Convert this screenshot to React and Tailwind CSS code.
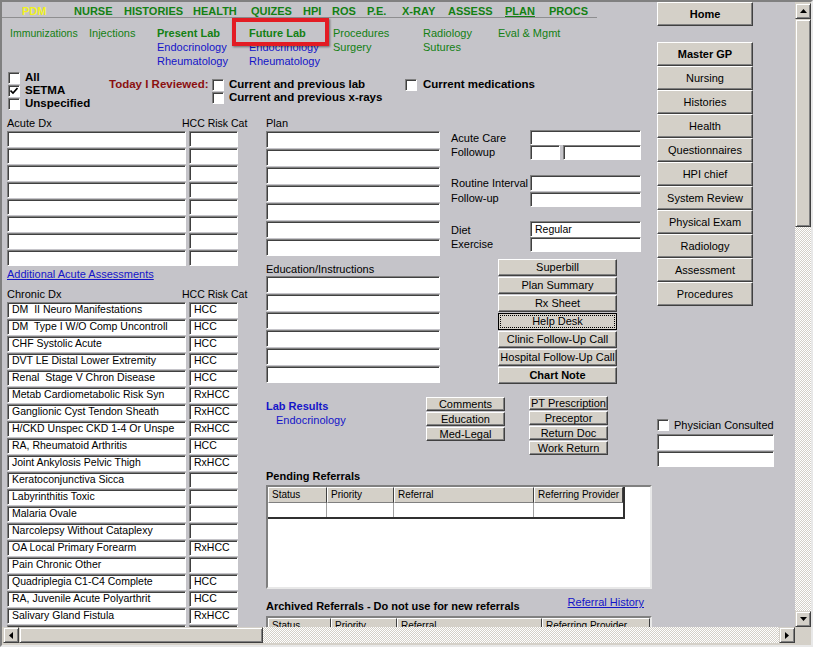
import React from "react";

const inputCls =
  "bg-white border border-t-[#808080] border-l-[#808080] border-b-white border-r-white shadow-[inset_1px_1px_0_#404040] overflow-hidden whitespace-pre text-[10.5px] leading-[13px] pl-[4px] text-black";
const btnCls =
  "bg-[#d4d0c8] border border-t-white border-l-white border-b-[#404040] border-r-[#404040] shadow-[inset_-1px_-1px_0_#808080] text-[11px] text-black flex items-center justify-center whitespace-nowrap";

const NAV = [
  ["PDM", "w-[52px]", "text-[#f2f21e]", ""],
  ["NURSE", "w-[50px]", "text-[#138013]", ""],
  ["HISTORIES", "w-[69px]", "text-[#138013]", ""],
  ["HEALTH", "w-[58px]", "text-[#138013]", ""],
  ["QUIZES", "w-[52px]", "text-[#138013]", ""],
  ["HPI", "w-[29px]", "text-[#138013]", ""],
  ["ROS", "w-[35px]", "text-[#138013]", ""],
  ["P.E.", "w-[35px]", "text-[#138013]", ""],
  ["X-RAY", "w-[46px]", "text-[#138013]", ""],
  ["ASSESS", "w-[57px]", "text-[#138013]", ""],
  ["PLAN", "w-[44px]", "text-[#138013]", "underline"],
  ["PROCS", "w-[48px]", "text-[#138013]", ""],
];

const CHRONIC = [
  ["DM  II Neuro Manifestations", "HCC"],
  ["DM  Type I W/O Comp Uncontroll", "HCC"],
  ["CHF Systolic Acute", "HCC"],
  ["DVT LE Distal Lower Extremity", "HCC"],
  ["Renal  Stage V Chron Disease", "HCC"],
  ["Metab Cardiometabolic Risk Syn", "RxHCC"],
  ["Ganglionic Cyst Tendon Sheath", "RxHCC"],
  ["H/CKD Unspec CKD 1-4 Or Unspe", "RxHCC"],
  ["RA, Rheumatoid Arthritis", "HCC"],
  ["Joint Ankylosis Pelvic Thigh", "RxHCC"],
  ["Keratoconjunctiva Sicca", ""],
  ["Labyrinthitis Toxic", ""],
  ["Malaria Ovale", ""],
  ["Narcolepsy Without Cataplexy", ""],
  ["OA Local Primary Forearm", "RxHCC"],
  ["Pain Chronic Other", ""],
  ["Quadriplegia C1-C4 Complete", "HCC"],
  ["RA, Juvenile Acute Polyarthrit", "HCC"],
  ["Salivary Gland Fistula", "RxHCC"],
  ["", ""],
];

const SIDE = [
  "Nursing",
  "Histories",
  "Health",
  "Questionnaires",
  "HPI chief",
  "System Review",
  "Physical Exam",
  "Radiology",
  "Assessment",
  "Procedures",
];

function Box({ checked }) {
  return (
    <div className="w-[12px] h-[12px] shrink-0 bg-white border border-t-[#808080] border-l-[#808080] border-b-white border-r-white shadow-[inset_1px_1px_0_#404040] flex items-center justify-center">
      {checked && (
        <svg width="8" height="8" viewBox="0 0 8 8">
          <path d="M0.5 3.5 L3 6 L7.5 1" stroke="#000" strokeWidth="1.6" fill="none" />
        </svg>
      )}
    </div>
  );
}

function Tri({ dir }) {
  const pts = {
    up: "0,4 3.5,0 7,4",
    down: "0,0 7,0 3.5,4",
    left: "4,0 4,7 0,3.5",
    right: "0,0 0,7 4,3.5",
  }[dir];
  const vert = dir === "up" || dir === "down";
  return (
    <svg width={vert ? 7 : 4} height={vert ? 4 : 7} viewBox={vert ? "0 0 7 4" : "0 0 4 7"}>
      <polygon points={pts} fill="#000" />
    </svg>
  );
}

const arrowCls =
  "w-[16px] h-[16px] shrink-0 bg-[#d4d0c8] border border-t-[#d4d0c8] border-l-[#d4d0c8] border-b-[#404040] border-r-[#404040] shadow-[inset_1px_1px_0_#fff,inset_-1px_-1px_0_#808080] flex items-center justify-center";
const ditherCls =
  "bg-[image:repeating-conic-gradient(#d4d0c8_0%_25%,#ffffff_0%_50%)] bg-[length:2px_2px]";

function HeaderCell({ w, children }) {
  return (
    <div
      className={`${w} h-[16px] shrink-0 bg-[#d4d0c8] border border-t-white border-l-white border-b-[#808080] border-r-[#404040] text-[10px] leading-[14px] pl-[3px] text-black whitespace-nowrap overflow-hidden`}
    >
      {children}
    </div>
  );
}

export default function App() {
  return (
    <div className="w-[813px] h-[647px] bg-[#d4d0c8] border-t-2 border-l-2 border-t-[#808080] border-l-[#808080] border-r-2 border-b-2 border-r-[#e8e8e8] border-b-[#e8e8e8] flex flex-col font-['Liberation_Sans',Arial,sans-serif] text-black overflow-hidden">
      <div className="flex h-[625px] shrink-0">
        {/* content */}
        <div className="w-[793px] h-[625px] bg-[#c5c4c9] overflow-hidden flex">
          {/* main column */}
          <div className="w-[655px] shrink-0 relative flex flex-col">
            {/* top nav */}
            <div className="flex h-[18px] w-[595px] border-b border-[#8e8e90]">
              <div className="w-[20px] shrink-0" />
              {NAV.map(([t, w, c, u]) => (
                <div
                  key={t}
                  className={`${w} ${c} ${u} shrink-0 pt-[3px] leading-[12px] text-[11px] font-bold whitespace-nowrap`}
                >
                  {t}
                </div>
              ))}
            </div>

            {/* sub nav */}
            <div className="flex mt-[8px] ml-[8px] text-[11px] leading-[14px] text-[#138013]">
              <div className="w-[79px] shrink-0 text-[10.5px]">Immunizations</div>
              <div className="w-[68px] shrink-0">Injections</div>
              <div className="w-[92px] shrink-0 flex flex-col">
                <span className="font-bold">Present Lab</span>
                <span className="text-[#1414c8]">Endocrinology</span>
                <span className="text-[#1414c8]">Rheumatology</span>
              </div>
              <div className="w-[84px] shrink-0 flex flex-col">
                <span className="font-bold">Future Lab</span>
                <span className="text-[#1414c8]">Endocrinology</span>
                <span className="text-[#1414c8]">Rheumatology</span>
              </div>
              <div className="w-[90px] shrink-0 flex flex-col">
                <span>Procedures</span>
                <span>Surgery</span>
              </div>
              <div className="w-[75px] shrink-0 flex flex-col">
                <span>Radiology</span>
                <span>Sutures</span>
              </div>
              <div className="shrink-0">Eval &amp; Mgmt</div>
            </div>

            {/* red highlight annotation */}
            <div className="absolute left-[230px] top-[16px] w-[97px] h-[28px] border-[4px] border-[#e31c24] shadow-[1px_1px_2px_rgba(0,0,0,0.45)]" />

            {/* checkbox area */}
            <div className="flex mt-[3px] text-[11.5px] font-bold">
              <div className="w-[107px] shrink-0 pl-[6px] flex flex-col">
                {[
                  ["All", false],
                  ["SETMA", true],
                  ["Unspecified", false],
                ].map(([t, c]) => (
                  <div key={t} className="h-[13px] flex items-center gap-[5px] whitespace-nowrap">
                    <Box checked={c} />
                    <span className="leading-[13px]">{t}</span>
                  </div>
                ))}
              </div>
              <div className="w-[103px] shrink-0 mt-[7px] leading-[13px] text-[#8b1010] whitespace-nowrap">
                Today I Reviewed:
              </div>
              <div className="w-[193px] shrink-0 mt-[7px] flex flex-col">
                {["Current and previous lab", "Current and previous x-rays"].map((t) => (
                  <div key={t} className="h-[13px] flex items-center gap-[5px] whitespace-nowrap">
                    <Box />
                    <span className="leading-[13px]">{t}</span>
                  </div>
                ))}
              </div>
              <div className="mt-[7px] h-[13px] flex items-center gap-[6px] whitespace-nowrap">
                <Box />
                <span className="leading-[13px]">Current medications</span>
              </div>
            </div>

            {/* two columns */}
            <div className="flex mt-[6px] text-[11px]">
              {/* left column */}
              <div className="w-[231px] ml-[5px] shrink-0 flex flex-col">
                <div className="flex h-[15px] leading-[15px] whitespace-nowrap">
                  <span className="w-[175px] shrink-0">Acute Dx</span>
                  <span className="text-[10.5px]">HCC Risk Cat</span>
                </div>
                {Array.from({ length: 8 }).map((_, i) => (
                  <div key={i} className="flex gap-[3px] mb-[1px]">
                    <div className={`${inputCls} w-[179px] h-[16px]`} />
                    <div className={`${inputCls} w-[49px] h-[16px]`} />
                  </div>
                ))}
                <div className="h-[20px] pt-[1px] leading-[13px]">
                  <span className="text-[#1414c8] underline whitespace-nowrap">Additional Acute Assessments</span>
                </div>
                <div className="flex h-[15px] leading-[15px] whitespace-nowrap">
                  <span className="w-[175px] shrink-0">Chronic Dx</span>
                  <span className="text-[10.5px]">HCC Risk Cat</span>
                </div>
                {CHRONIC.map(([d, h], i) => (
                  <div key={i} className="flex gap-[3px] mb-[1px]">
                    <div className={`${inputCls} w-[179px] h-[16px]`}>{d}</div>
                    <div className={`${inputCls} w-[49px] h-[16px]`}>{h}</div>
                  </div>
                ))}
              </div>

              {/* middle column */}
              <div className="ml-[28px] w-[392px] shrink-0 flex flex-col">
                {/* plan section */}
                <div className="flex">
                  <div className="w-[174px] shrink-0 flex flex-col">
                    <div className="h-[15px] leading-[15px]">Plan</div>
                    {Array.from({ length: 7 }).map((_, i) => (
                      <div key={i} className={`${inputCls} w-[174px] h-[17px] mb-[1px]`} />
                    ))}
                  </div>
                  <div className="ml-[11px] pt-[14px] flex flex-col whitespace-nowrap">
                    <div className="flex h-[15px]">
                      <span className="w-[79px] leading-[15px] pt-[1px]">Acute Care</span>
                      <div className={`${inputCls} w-[111px] h-[15px]`} />
                    </div>
                    <div className="flex h-[15px]">
                      <span className="w-[79px] leading-[15px]">Followup</span>
                      <div className={`${inputCls} w-[30px] h-[15px]`} />
                      <div className={`${inputCls} w-[78px] h-[15px] ml-[3px]`} />
                    </div>
                    <div className="h-[15px]" />
                    <div className="flex h-[16px]">
                      <span className="w-[79px] leading-[15px] pt-[1px]">Routine Interval</span>
                      <div className={`${inputCls} w-[111px] h-[16px]`} />
                    </div>
                    <div className="flex h-[15px] mt-[1px]">
                      <span className="w-[79px] leading-[13px]">Follow-up</span>
                      <div className={`${inputCls} w-[111px] h-[15px]`} />
                    </div>
                    <div className="h-[14px]" />
                    <div className="flex h-[16px]">
                      <span className="w-[79px] leading-[16px] pt-[1px]">Diet</span>
                      <div className={`${inputCls} w-[111px] h-[16px] leading-[14px]`}>Regular</div>
                    </div>
                    <div className="flex h-[15px]">
                      <span className="w-[79px] leading-[15px]">Exercise</span>
                      <div className={`${inputCls} w-[111px] h-[15px]`} />
                    </div>
                  </div>
                </div>

                {/* education + buttons */}
                <div className="flex mt-[2px]">
                  <div className="w-[174px] shrink-0 flex flex-col">
                    <div className="h-[17px] pt-[4px] leading-[13px] whitespace-nowrap">Education/Instructions</div>
                    {Array.from({ length: 6 }).map((_, i) => (
                      <div key={i} className={`${inputCls} w-[174px] h-[17px] mb-[1px]`} />
                    ))}
                  </div>
                  <div className="ml-[58px] w-[119px] shrink-0 flex flex-col">
                    <div className={`${btnCls} h-[17px] mb-[1px]`}>Superbill</div>
                    <div className={`${btnCls} h-[17px] mb-[1px]`}>Plan Summary</div>
                    <div className={`${btnCls} h-[17px] mb-[1px]`}>Rx Sheet</div>
                    <div className="h-[17px] mb-[1px] bg-[#d4d0c8] border border-black p-[1px]">
                      <div className="w-full h-full border border-dotted border-black flex items-center justify-center text-[11px] leading-[11px]">
                        Help Desk
                      </div>
                    </div>
                    <div className={`${btnCls} h-[17px] mb-[1px]`}>Clinic Follow-Up Call</div>
                    <div className={`${btnCls} h-[17px] mb-[1px]`}>Hospital Follow-Up Call</div>
                    <div className={`${btnCls} h-[17px] mb-[1px] font-bold`}>Chart Note</div>
                  </div>
                </div>

                {/* lab results */}
                <div className="flex mt-[10px]">
                  <div className="w-[160px] shrink-0 pt-[4px] flex flex-col leading-[14px] text-[#1414c8]">
                    <span className="font-bold">Lab Results</span>
                    <span className="pl-[10px]">Endocrinology</span>
                  </div>
                  <div className="w-[79px] shrink-0 pt-[2px] flex flex-col">
                    <div className={`${btnCls} h-[14px] mb-[1px]`}>Comments</div>
                    <div className={`${btnCls} h-[14px] mb-[1px]`}>Education</div>
                    <div className={`${btnCls} h-[14px] mb-[1px]`}>Med-Legal</div>
                  </div>
                  <div className="ml-[24px] w-[79px] shrink-0 pt-[1px] flex flex-col">
                    <div className={`${btnCls} h-[14px] mb-[1px]`}>PT Prescription</div>
                    <div className={`${btnCls} h-[14px] mb-[1px]`}>Preceptor</div>
                    <div className={`${btnCls} h-[14px] mb-[1px]`}>Return Doc</div>
                    <div className={`${btnCls} h-[14px] mb-[1px]`}>Work Return</div>
                  </div>
                </div>

                {/* pending referrals */}
                <div className="mt-[13px] h-[14px] leading-[14px] font-bold">Pending Referrals</div>
                <div className="mt-[2px] w-[386px] h-[104px] shrink-0 bg-white border-2 border-t-[#808080] border-l-[#808080] border-b-[#e8e8e8] border-r-[#e8e8e8]">
                  <div className="w-[357px] border-r-2 border-b-2 border-[#303030]">
                    <div className="flex">
                      <HeaderCell w="w-[59px]">Status</HeaderCell>
                      <HeaderCell w="w-[67px]">Priority</HeaderCell>
                      <HeaderCell w="w-[140px]">Referral</HeaderCell>
                      <HeaderCell w="w-[89px]">Referring Provider</HeaderCell>
                    </div>
                    <div className="flex h-[14px]">
                      <div className="w-[59px] border-r border-[#a0a0a0]" />
                      <div className="w-[67px] border-r border-[#a0a0a0]" />
                      <div className="w-[140px] border-r border-[#a0a0a0]" />
                      <div className="w-[89px]" />
                    </div>
                  </div>
                </div>

                {/* archived */}
                <div className="mt-[6px] w-[378px] flex justify-between items-start whitespace-nowrap">
                  <span className="pt-[4px] leading-[14px] font-bold">Archived Referrals - Do not use for new referrals</span>
                  <span className="leading-[14px] text-[#1414c8] underline">Referral History</span>
                </div>
                <div className="mt-[3px] w-[386px] h-[40px] shrink-0 bg-white border-2 border-t-[#808080] border-l-[#808080] border-b-[#e8e8e8] border-r-[#e8e8e8] overflow-hidden">
                  <div className="flex">
                    <HeaderCell w="w-[63px]">Status</HeaderCell>
                    <HeaderCell w="w-[66px]">Priority</HeaderCell>
                    <HeaderCell w="w-[145px]">Referral</HeaderCell>
                    <HeaderCell w="w-[108px]">Referring Provider</HeaderCell>
                  </div>
                </div>
              </div>
            </div>
          </div>

          {/* sidebar */}
          <div className="w-[138px] shrink-0 flex flex-col text-[11px]">
            <div className={`${btnCls} w-[96px] h-[24px] font-bold`}>Home</div>
            <div className={`${btnCls} w-[96px] h-[24px] mt-[16px] font-bold`}>Master GP</div>
            {SIDE.map((s) => (
              <div key={s} className={`${btnCls} w-[96px] h-[24px]`}>
                {s}
              </div>
            ))}
            <div className="mt-[112px] h-[14px] flex items-center gap-[5px] whitespace-nowrap">
              <Box />
              <span className="leading-[14px]">Physician Consulted</span>
            </div>
            <div className={`${inputCls} w-[117px] h-[16px] mt-[2px] mb-[1px]`} />
            <div className={`${inputCls} w-[117px] h-[16px]`} />
          </div>
        </div>

        {/* vertical scrollbar */}
        <div className="w-[16px] h-[625px] shrink-0 flex flex-col pt-[1px]">
          <div className={arrowCls}>
            <Tri dir="up" />
          </div>
          <div className="h-[208px] shrink-0 bg-[#d4d0c8] border border-t-[#d4d0c8] border-l-[#d4d0c8] border-b-[#404040] border-r-[#404040] shadow-[inset_1px_1px_0_#fff,inset_-1px_-1px_0_#808080]" />
          <div className={`flex-1 ${ditherCls}`} />
          <div className={arrowCls}>
            <Tri dir="down" />
          </div>
        </div>
      </div>

      {/* horizontal scrollbar */}
      <div className="flex h-[16px] shrink-0">
        <div className="w-[793px] flex pl-[1px]">
          <div className={arrowCls}>
            <Tri dir="left" />
          </div>
          <div className="w-[244px] shrink-0 bg-[#d4d0c8] border border-t-[#d4d0c8] border-l-[#d4d0c8] border-b-[#404040] border-r-[#404040] shadow-[inset_1px_1px_0_#fff,inset_-1px_-1px_0_#808080]" />
          <div className={`flex-1 ${ditherCls}`} />
          <div className={arrowCls}>
            <Tri dir="right" />
          </div>
        </div>
        <div className="w-[16px] shrink-0 bg-[#d4d0c8]" />
      </div>
    </div>
  );
}
